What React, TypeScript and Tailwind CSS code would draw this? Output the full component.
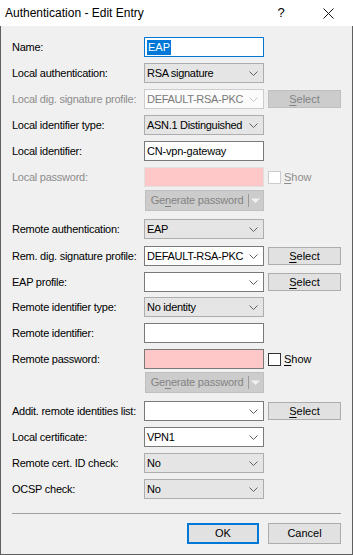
import React from "react";

type RowProps = {
  label: string;
  disabled?: boolean;
  className?: string;
  children?: React.ReactNode;
};

// chevron used by every combo box
const Chevron = ({ disabled }: { disabled?: boolean }) => (
  <svg width="9" height="5" viewBox="0 0 9 5" className="shrink-0 ml-[3px]">
    <path
      d="M0.5 0.5 L4.5 4.5 L8.5 0.5"
      fill="none"
      stroke={disabled ? "#c4c4c4" : "#606060"}
      strokeWidth="1"
    />
  </svg>
);

const Row = ({ label, disabled, className, children }: RowProps) => (
  <div className={"flex items-center h-[20px] " + (className ?? "")}>
    <div
      className={
        "w-[132px] shrink-0 whitespace-nowrap tracking-[-0.25px] " +
        (disabled ? "text-[#8d8d8d]" : "text-black")
      }
    >
      {label}
    </div>
    {children}
  </div>
);

type ComboProps = {
  value?: string;
  kind?: "list" | "edit" | "disabled";
};

const Combo = ({ value = "", kind = "list" }: ComboProps) => {
  const box =
    kind === "list"
      ? "bg-[#e5e5e5] border-[#adadad]"
      : kind === "edit"
      ? "bg-white border-[#7a7a7a]"
      : "bg-[#fbfbfb] border-[#cccccc]";
  return (
    <div
      className={
        "w-[120px] h-[20px] shrink-0 border flex items-center pl-[2px] pr-[5px] " +
        box
      }
    >
      <div
        className={
          "flex-1 whitespace-nowrap tracking-[-0.3px] " +
          (kind === "disabled" ? "text-[#7a7a7a]" : "text-black")
        }
      >
        {value}
      </div>
      <Chevron disabled={kind === "disabled"} />
    </div>
  );
};

const TextBox = ({
  value = "",
  pink,
  disabled,
  focused,
}: {
  value?: string;
  pink?: boolean;
  disabled?: boolean;
  focused?: boolean;
}) => (
  <div
    className={
      "w-[120px] h-[20px] shrink-0 border flex items-center pl-[2px] " +
      (pink ? "bg-[#ffc8c8] " : "bg-white ") +
      (focused
        ? "border-[#0078d7]"
        : disabled
        ? "border-[#e0e0e0]"
        : "border-[#7a7a7a]")
    }
  >
    {focused ? (
      <span className="bg-[#0078d7] text-white px-[1px] leading-[15px]">
        {value}
      </span>
    ) : (
      <span className="whitespace-nowrap tracking-[-0.2px]">{value}</span>
    )}
  </div>
);

const SelectBtn = ({ disabled }: { disabled?: boolean }) => (
  <div
    className={
      "ml-[4px] w-[73px] h-[18px] border flex items-center justify-center " +
      (disabled
        ? "bg-[#cccccc] border-[#bfbfbf] text-[#838383]"
        : "bg-[#e1e1e1] border-[#adadad] text-black")
    }
  >
    <span>
      <span className="underline underline-offset-2">S</span>elect
    </span>
  </div>
);

const ShowBox = ({ disabled }: { disabled?: boolean }) => (
  <div className="flex items-center ml-[4px]">
    <div
      className={
        "w-[13px] h-[13px] bg-white border " +
        (disabled ? "border-[#cccccc]" : "border-[#333333]")
      }
    />
    <span className={"ml-[3px] " + (disabled ? "text-[#8d8d8d]" : "text-black")}>
      <span className="underline underline-offset-2">S</span>how
    </span>
  </div>
);

const GenerateBtn = ({ className }: { className?: string }) => (
  <div className={"flex h-[21px] " + (className ?? "")}>
    <div className="w-[132px] shrink-0" />
    <div className="w-[119px] ml-[1px] h-[21px] bg-[#cccccc] border border-[#bfbfbf] flex items-center text-[#838383]">
      <div className="flex-1 text-center tracking-[-0.2px]">
        Ge<span className="underline underline-offset-2">n</span>erate password
      </div>
      <div className="w-px h-[13px] bg-[#9a9a9a]" />
      <svg width="14" height="6" viewBox="0 0 14 6" className="shrink-0">
        <path d="M2 0.5 L11 0.5 L6.5 5 Z" fill="#f2f2f2" />
      </svg>
    </div>
  </div>
);

const App = () => {
  return (
    <div className="w-[353px] h-[555px] flex flex-col font-['Liberation_Sans',Arial,sans-serif] text-[11px] text-black select-none">
      {/* title bar */}
      <div className="h-[26px] bg-white flex items-center shrink-0">
        <div className="pl-[5px] text-[12px] flex-1">Authentication - Edit Entry</div>
        <div className="text-[13px] w-[12px] mr-[36px] text-center">?</div>
        <svg width="11" height="11" viewBox="0 0 11 11" className="mr-[19px]">
          <path d="M0.5 0.5 L10.5 10.5 M10.5 0.5 L0.5 10.5" stroke="#111" strokeWidth="1" />
        </svg>
      </div>

      {/* body */}
      <div className="flex-1 bg-[#f0f0f0] border-x border-b border-[#5f5f5f] pl-[11px] pr-[11px] pt-[11px] flex flex-col">
        <Row label="Name:">
          <TextBox value="EAP" focused />
        </Row>
        <Row label="Local authentication:" className="mt-[6px]">
          <Combo value="RSA signature" />
        </Row>
        <Row label="Local dig. signature profile:" disabled className="mt-[6px]">
          <Combo value="DEFAULT-RSA-PKC" kind="disabled" />
          <SelectBtn disabled />
        </Row>
        <Row label="Local identifier type:" className="mt-[6px]">
          <Combo value="ASN.1 Distinguished" />
        </Row>
        <Row label="Local identifier:" className="mt-[6px]">
          <TextBox value="CN-vpn-gateway" />
        </Row>
        <Row label="Local password:" disabled className="mt-[6px]">
          <TextBox pink disabled />
          <ShowBox disabled />
        </Row>
        <GenerateBtn className="mt-[3px]" />

        <Row label="Remote authentication:" className="mt-[8px]">
          <Combo value="EAP" />
        </Row>
        <Row label="Rem. dig. signature profile:" className="mt-[7px]">
          <Combo value="DEFAULT-RSA-PKC" kind="edit" />
          <SelectBtn />
        </Row>
        <Row label="EAP profile:" className="mt-[6px]">
          <Combo kind="edit" />
          <SelectBtn />
        </Row>
        <Row label="Remote identifier type:" className="mt-[5px]">
          <Combo value="No identity" />
        </Row>
        <Row label="Remote identifier:" className="mt-[6px]">
          <TextBox />
        </Row>
        <Row label="Remote password:" className="mt-[6px]">
          <TextBox pink />
          <ShowBox />
        </Row>
        <GenerateBtn className="mt-[3px]" />

        <Row label="Addit. remote identities list:" className="mt-[8px]">
          <Combo kind="edit" />
          <SelectBtn />
        </Row>
        <Row label="Local certificate:" className="mt-[6px]">
          <Combo value="VPN1" kind="edit" />
        </Row>
        <Row label="Remote cert. ID check:" className="mt-[6px]">
          <Combo value="No" />
        </Row>
        <Row label="OCSP check:" className="mt-[6px]">
          <Combo value="No" />
        </Row>

        <div className="mt-[14px] border-t border-[#a0a0a0]" />

        <div className="mt-[9px] flex justify-end gap-[9px]">
          <div className="w-[72px] h-[21px] border-2 border-[#0078d7] bg-[#e1e1e1] flex items-center justify-center">
            OK
          </div>
          <div className="w-[73px] h-[21px] border border-[#adadad] bg-[#e1e1e1] flex items-center justify-center">
            Cancel
          </div>
        </div>
      </div>
    </div>
  );
};

export default App;
